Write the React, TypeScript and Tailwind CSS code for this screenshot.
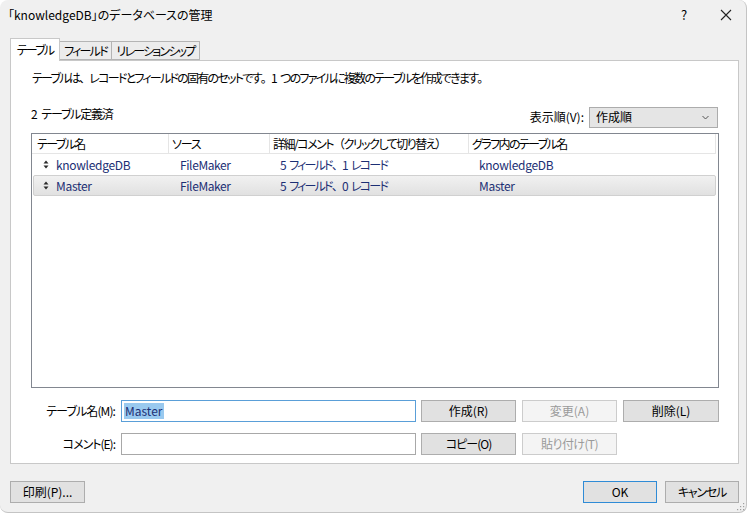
import React from "react";

function SortIcon() {
  return (
    <svg width="6" height="9" viewBox="0 0 6 9" className="shrink-0">
      <path d="M3 0.5 L5.5 3.5 L0.5 3.5 Z" fill="#2a2a2a" />
      <path d="M0.5 5.5 L5.5 5.5 L3 8.5 Z" fill="#2a2a2a" />
    </svg>
  );
}

function P({ children }: { children: React.ReactNode }) {
  return <span className="[font-feature-settings:normal]">{children}</span>;
}

function Btn({
  children,
  w,
  disabled,
  primary,
}: {
  children: React.ReactNode;
  w: string;
  disabled?: boolean;
  primary?: boolean;
}) {
  const base = "h-[22px] flex items-center justify-center text-[12px] border shrink-0 whitespace-nowrap ";
  const look = disabled
    ? "bg-[#f4f4f4] border-[#cccccc] text-[#9a9a9a]"
    : primary
    ? "bg-[#e1e1e1] border-[#2f8bd6] text-black"
    : "bg-[#e1e1e1] border-[#adadad] text-black";
  return <div className={base + look + " " + w}>{children}</div>;
}

const rows = [
  { name: "knowledgeDB", src: "FileMaker", n: "1", graph: "knowledgeDB", sel: false },
  { name: "Master", src: "FileMaker", n: "0", graph: "Master", sel: true },
];

export default function App() {
  return (
    <div className="w-[751px] h-[514px] bg-white overflow-hidden font-['Noto_Sans_CJK_JP',sans-serif] [font-feature-settings:'palt'] text-[12px] text-black">
      <div className="w-[747px] h-[513px] bg-[#f0f0f0] border-r border-b border-[#c4c4c4] rounded-[8px] flex flex-col relative">
        {/* title bar */}
        <div className="h-[30px] flex items-center pl-[8px] shrink-0">
          <div className="flex-1 text-[12px]">「knowledgeDB」のデータベースの管理</div>
          <div className="w-[20px] text-center text-[13px] mr-[26px]">?</div>
          <svg width="12" height="12" viewBox="0 0 12 12" className="mr-[14px]">
            <path d="M1 1 L11 11 M11 1 L1 11" stroke="#222" strokeWidth="1.1" />
          </svg>
        </div>

        {/* tabs */}
        <div className="mt-[8px] ml-[10px] flex items-end h-[22px] relative z-10 whitespace-nowrap tracking-[-1.8px]">
          <div className="h-[23px] w-[50px] bg-white border border-[#c8c8c8] border-b-0 flex items-center justify-center -mb-px">
            テーブル
          </div>
          <div className="h-[19px] w-[52px] bg-[#ececec] border border-[#b4b4b4] border-l-0 flex items-center justify-center">
            フィールド
          </div>
          <div className="h-[19px] w-[88px] bg-[#ececec] border border-[#b4b4b4] border-l-0 flex items-center justify-center">
            リレーションシップ
          </div>
        </div>

        {/* panel */}
        <div className="ml-[10px] w-[729px] h-[404px] bg-white border border-[#c8c8c8] flex flex-col pl-[20px] pr-[19px]">
          <div className="mt-[8px] h-[18px] leading-[18px] pl-[1px] whitespace-nowrap tracking-[-1.75px]">
            テーブルは<P>、</P>レコードとフィールドの固有のセットです<P>。</P>1{"\u2002"}つのファイルに複数のテーブルを作成できます<P>。</P>
          </div>

          <div className="mt-[18px] h-[22px] flex justify-between">
            <div className="leading-[18px] tracking-[-1.2px]">2{"\u2002"}テーブル定義済</div>
            <div className="flex items-center mt-[2px] h-[20px] mr-[1px]">
              <span className="mr-[5px]">表示順(V):</span>
              <div className="w-[129px] h-[21px] bg-[#e5e5e5] border border-[#acacac] flex items-center pl-[6px] pr-[8px] justify-between">
                <span>作成順</span>
                <svg width="7" height="5" viewBox="0 0 7 5">
                  <path d="M0.5 1 L3.5 4 L6.5 1" stroke="#555" strokeWidth="1" fill="none" />
                </svg>
              </div>
            </div>
          </div>

          {/* list */}
          <div className="mt-[6px] h-[255px] border border-[#828790] flex flex-col">
            <div className="h-[20px] flex border-b border-[#e5e5e5] w-[684px] whitespace-nowrap">
              <div className="w-[137px] border-r border-[#e5e5e5] pl-[5px] leading-[19px] tracking-[-1.6px]">テーブル名</div>
              <div className="w-[101px] border-r border-[#e5e5e5] pl-[3px] leading-[19px] tracking-[-1.2px]">ソース</div>
              <div className="w-[199px] border-r border-[#e5e5e5] pl-[3px] leading-[19px] tracking-[-1.5px]">詳細/コメント<P>（</P>クリックして切り替え<P>）</P></div>
              <div className="flex-1 border-r border-[#e5e5e5] pl-[3px] leading-[19px] tracking-[-1.6px]">グラフ内のテーブル名</div>
            </div>
            {rows.map((r) => (
              <div
                key={r.name}
                className={
                  "h-[21px] flex items-center text-[#1c2f74] whitespace-nowrap " +
                  (r.sel
                    ? "ml-[1px] mr-[2px] bg-gradient-to-b from-[#f1f1f1] to-[#e1e1e1] border border-[#d0d0d0] rounded-[2px]"
                    : "mx-[1px] border border-transparent")
                }
              >
                <div className="w-[136px] flex items-center pl-[9px] gap-[7px]">
                  <SortIcon />
                  <span className="tracking-[-0.3px]">{r.name}</span>
                </div>
                <div className="w-[101px] pl-[10px] tracking-[-0.4px]">{r.src}</div>
                <div className="w-[199px] pl-[9px] tracking-[-1.8px]">
                  5{"\u2002"}フィールド<P>、</P>{r.n}{"\u2002"}レコード
                </div>
                <div className="flex-1 pl-[9px] tracking-[-0.3px]">{r.graph}</div>
              </div>
            ))}
          </div>

          {/* form */}
          <div className="mt-[12px] flex items-center h-[22px]">
            <div className="w-[85px] text-right tracking-[-0.9px] pr-[1px]">テーブル名(M):</div>
            <div className="ml-[5px] w-[295px] h-[22px] border border-[#5a9fd8] flex items-center pl-[2px]">
              <span className="bg-[#99c9ef] text-[#1c2f74] leading-[16px] px-[1px]">Master</span>
            </div>
            <div className="ml-[5px]"><Btn w="w-[95px]">作成(R)</Btn></div>
            <div className="ml-[6px]"><Btn w="w-[95px]" disabled>変更(A)</Btn></div>
            <div className="ml-[6px]"><Btn w="w-[96px]">削除(L)</Btn></div>
          </div>
          <div className="mt-[11px] flex items-center h-[22px]">
            <div className="w-[85px] text-right tracking-[-1px] pr-[1px]">コメント(E):</div>
            <div className="ml-[5px] w-[295px] h-[22px] border border-[#a8a8a8] bg-white" />
            <div className="ml-[5px]"><Btn w="w-[95px]"><span className="tracking-[-1px]">コピー(O)</span></Btn></div>
            <div className="ml-[6px]"><Btn w="w-[95px]" disabled><span className="tracking-[-0.6px]">貼り付け(T)</span></Btn></div>
          </div>
        </div>

        {/* bottom buttons */}
        <div className="mt-[17px] ml-[10px] mr-[7px] flex items-center">
          <Btn w="w-[75px]">印刷(P)...</Btn>
          <div className="flex-1" />
          <div className="mr-[1px]"><Btn w="w-[74px]" primary>OK</Btn></div>
          <div className="ml-[7px]"><Btn w="w-[74px]"><span className="tracking-[-1.2px]">キャンセル</span></Btn></div>
        </div>

        <svg width="10" height="10" viewBox="0 0 10 10" className="absolute right-[1px] bottom-[1px]">
          {[
            [8, 2], [8, 5], [5, 5], [8, 8], [5, 8], [2, 8],
          ].map(([x, y], i) => (
            <rect key={i} x={x} y={y} width="1.2" height="1.2" fill="#a0a0a0" />
          ))}
        </svg>
      </div>
    </div>
  );
}
